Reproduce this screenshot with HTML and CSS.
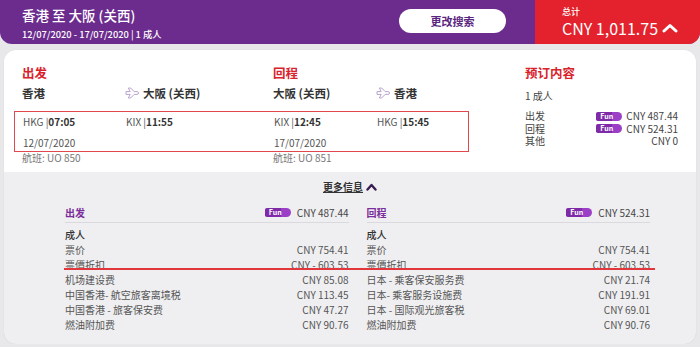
FILE: index.html
```html
<!DOCTYPE html>
<html lang="zh">
<head>
  <meta charset="UTF-8">
  <meta name="viewport" content="width=device-width, initial-scale=1.0">
  <title>预订内容</title>
  <link rel="stylesheet" href="styles.css">
</head>
<body>
  <header class="topbar">
    <div class="trip">
      <div class="trip-title">香港 至 大阪 (关西)</div>
      <div class="trip-dates">12/07/2020 - 17/07/2020 | 1 成人</div>
    </div>
    <button class="change-btn">更改搜索</button>
    <div class="total">
      <div class="total-label">总计</div>
      <div class="total-amount">CNY 1,011.75
        <svg class="chev-white" width="16" height="10" viewBox="0 0 16 10"><polyline points="2,8 8,2.5 14,8" fill="none" stroke="#fff" stroke-width="3" stroke-linecap="round" stroke-linejoin="round"/></svg>
      </div>
    </div>
  </header>

  <main class="card">
    <section class="summary">
      <div class="flights">
        <div class="leg-row">
          <h2 class="leg-title">出发</h2><span></span>
          <h2 class="leg-title">回程</h2><span></span>
        </div>
        <div class="leg-row cities">
          <span>香港</span>
          <span class="dest"><svg class="plane" width="14" height="12" viewBox="0 0 14 12"><path d="M1 4.6h4.2L3.4 1h2.2l3.6 3.6h2.9a1.4 1.4 0 0 1 0 2.8H9.2L5.6 11H3.4l1.8-3.6H1z" fill="none" stroke="#b9a2cd" stroke-width="1" stroke-linejoin="round"/></svg>大阪 (关西)</span>
          <span>大阪 (关西)</span>
          <span class="dest"><svg class="plane" width="14" height="12" viewBox="0 0 14 12"><path d="M1 4.6h4.2L3.4 1h2.2l3.6 3.6h2.9a1.4 1.4 0 0 1 0 2.8H9.2L5.6 11H3.4l1.8-3.6H1z" fill="none" stroke="#b9a2cd" stroke-width="1" stroke-linejoin="round"/></svg>香港</span>
        </div>
        <div class="times-box">
          <div class="leg-row times">
            <span>HKG |<b>07:05</b></span>
            <span>KIX |<b>11:55</b></span>
            <span>KIX |<b>12:45</b></span>
            <span>HKG |<b>15:45</b></span>
          </div>
          <div class="leg-row times">
            <span>12/07/2020</span><span></span>
            <span>17/07/2020</span><span></span>
          </div>
        </div>
        <div class="leg-row flight-no">
          <span>航班: UO 850</span><span></span>
          <span>航班: UO 851</span><span></span>
        </div>
      </div>

      <div class="booking">
        <h2 class="leg-title">预订内容</h2>
        <div class="pax">1 成人</div>
        <div class="book-lines">
          <div class="book-line"><span>出发</span><span class="fun">Fun</span><span class="amt">CNY 487.44</span></div>
          <div class="book-line"><span>回程</span><span class="fun">Fun</span><span class="amt">CNY 524.31</span></div>
          <div class="book-line"><span>其他</span><span></span><span class="amt">CNY 0</span></div>
        </div>
      </div>
    </section>

    <section class="details">
      <div class="more-info"><span>更多信息</span>
        <svg width="11" height="8" viewBox="0 0 11 8"><polyline points="1.5,6.5 5.5,2 9.5,6.5" fill="none" stroke="#3a1d52" stroke-width="2.4" stroke-linecap="round" stroke-linejoin="round"/></svg>
      </div>

      <div class="fare-cols">
        <div class="fare">
          <div class="fare-head"><span class="fare-name">出发</span><span class="fun">Fun</span><span class="fare-total">CNY 487.44</span></div>
          <div class="fare-rows">
            <div class="fare-row strong"><span>成人</span></div>
            <div class="fare-row"><span>票价</span><span>CNY 754.41</span></div>
            <div class="fare-row"><span>票價折扣</span><span>CNY - 603.53</span></div>
            <div class="fare-row"><span>机场建设费</span><span>CNY 85.08</span></div>
            <div class="fare-row"><span>中国香港- 航空旅客离境税</span><span>CNY 113.45</span></div>
            <div class="fare-row"><span>中国香港 - 旅客保安费</span><span>CNY 47.27</span></div>
            <div class="fare-row"><span>燃油附加费</span><span>CNY 90.76</span></div>
          </div>
        </div>
        <div class="fare">
          <div class="fare-head"><span class="fare-name">回程</span><span class="fun">Fun</span><span class="fare-total">CNY 524.31</span></div>
          <div class="fare-rows">
            <div class="fare-row strong"><span>成人</span></div>
            <div class="fare-row"><span>票价</span><span>CNY 754.41</span></div>
            <div class="fare-row"><span>票價折扣</span><span>CNY - 603.53</span></div>
            <div class="fare-row"><span>日本 - 乘客保安服务费</span><span>CNY 21.74</span></div>
            <div class="fare-row"><span>日本- 乘客服务设施费</span><span>CNY 191.91</span></div>
            <div class="fare-row"><span>日本 - 国际观光旅客税</span><span>CNY 69.01</span></div>
            <div class="fare-row"><span>燃油附加费</span><span>CNY 90.76</span></div>
          </div>
        </div>
      </div>

      <div class="mark-line"></div>
    </section>
  </main>
</body>
</html>
```

FILE: styles.css
```css
body {
  margin: 0;
  background: #e8e8ea;
  font-family: "Noto Sans CJK SC", "Noto Sans", sans-serif;
  color: #444;
}

/* top bar */
.topbar {
  display: flex;
  align-items: stretch;
  height: 44px;
  background: #6b2c8e;
  border-radius: 0 0 12px 12px;
  overflow: hidden;
  color: #fff;
}

.trip {
  flex: 1;
  padding: 5px 0 0 22px;
}

.trip-title {
  font-size: 13.5px;
  font-weight: 500;
  line-height: 20px;
}

.trip-dates {
  font-size: 9.3px;
  font-weight: 500;
  line-height: 14px;
  margin-top: 2px;
}

.change-btn {
  align-self: flex-start;
  margin: 9px 29px 0 0;
  width: 107px;
  height: 24px;
  border: none;
  border-radius: 12px;
  background: #fff;
  color: #5a2680;
  font-family: inherit;
  font-size: 11px;
  font-weight: 700;
  cursor: pointer;
}

.total {
  width: 138px;
  padding: 6px 0 0 27px;
  background: #e3222d;
}

.total-label {
  font-size: 9px;
  line-height: 11px;
  font-weight: 500;
  margin-bottom: 1px;
}

.total-amount {
  display: flex;
  align-items: center;
  gap: 4px;
  font-size: 16px;
  line-height: 20px;
}

/* card */
.card {
  position: relative;
  margin: 6px 4px 0;
  border-radius: 12px;
  overflow: hidden;
  background: #efeff1;
  box-shadow: 0 0 1px rgba(0,0,0,0.15);
}

.summary {
  display: grid;
  grid-template-columns: 447px 1fr;
  column-gap: 56px;
  height: 112px;
  padding: 10px 18px 0;
  background: #fff;
}

.leg-row {
  display: grid;
  grid-template-columns: 103px 148px 103px 1fr;
}

.leg-title {
  margin: 0;
  font-size: 12.5px;
  line-height: 26px;
  font-weight: 700;
  color: #d9232c;
}

.cities {
  font-size: 11.5px;
  font-weight: 700;
  line-height: 14px;
  color: #333;
  margin-bottom: 11px;
}

.dest {
  display: flex;
  align-items: center;
  gap: 4px;
}

.times-box {
  margin-left: -8px;
  padding: 2.5px 0 1.5px 8px;
  border: 1.5px solid #e0474e;
  display: flex;
  flex-direction: column;
  gap: 7px;
}

.times {
  font-size: 10px;
  line-height: 14px;
  color: #555;
}

.times b {
  font-weight: 600;
  color: #333;
}

.flight-no {
  font-size: 10px;
  line-height: 12px;
  color: #777;
}

.booking {
  font-size: 10px;
  color: #444;
}

.pax {
  margin-top: 3px;
  line-height: 14px;
}

.book-lines {
  margin-top: 7px;
}

.book-line {
  display: grid;
  grid-template-columns: 1fr 26px auto;
  column-gap: 4px;
  align-items: center;
  height: 12.5px;
  line-height: 12.5px;
  white-space: nowrap;
}

.fun {
  display: inline-block;
  box-sizing: border-box;
  width: 26px;
  height: 9px;
  padding-left: 4px;
  border-radius: 2px 5px 5px 2px;
  background: linear-gradient(90deg, #7f2aa8 0 60%, #9a3fc6 60%);
  color: #fff;
  font-size: 7px;
  font-weight: 700;
  line-height: 9px;
}

.amt {
  min-width: 46px;
  text-align: right;
}

/* fare breakdown */
.details {
  position: relative;
  padding: 8px 46px 12px 61px;
}

.more-info {
  display: flex;
  justify-content: center;
  align-items: center;
  gap: 3px;
  font-size: 10px;
  font-weight: 700;
  line-height: 14px;
  color: #333;
  padding-right: 15px;
}

.more-info span {
  text-decoration: underline;
}

.fare-cols {
  display: grid;
  grid-template-columns: 1fr 1fr;
  column-gap: 18px;
  margin-top: 8px;
}

.fare-head {
  display: flex;
  align-items: center;
  height: 20px;
  border-bottom: 1px solid #d9d9de;
  font-size: 10px;
}

.fare-name {
  flex: 1;
  color: #7b2d9c;
  font-weight: 700;
}

.fare-total {
  margin-left: 6px;
  color: #444;
}

.fare-rows {
  padding-top: 4px;
}

.fare-row {
  display: flex;
  justify-content: space-between;
  font-size: 10px;
  line-height: 15px;
  color: #555;
}

.fare-row.strong {
  color: #333;
  font-weight: 500;
}

/* highlight annotation */
.mark-line {
  position: absolute;
  left: 60px;
  top: 96px;
  width: 591px;
  height: 2px;
  background: #e0363c;
}
```
